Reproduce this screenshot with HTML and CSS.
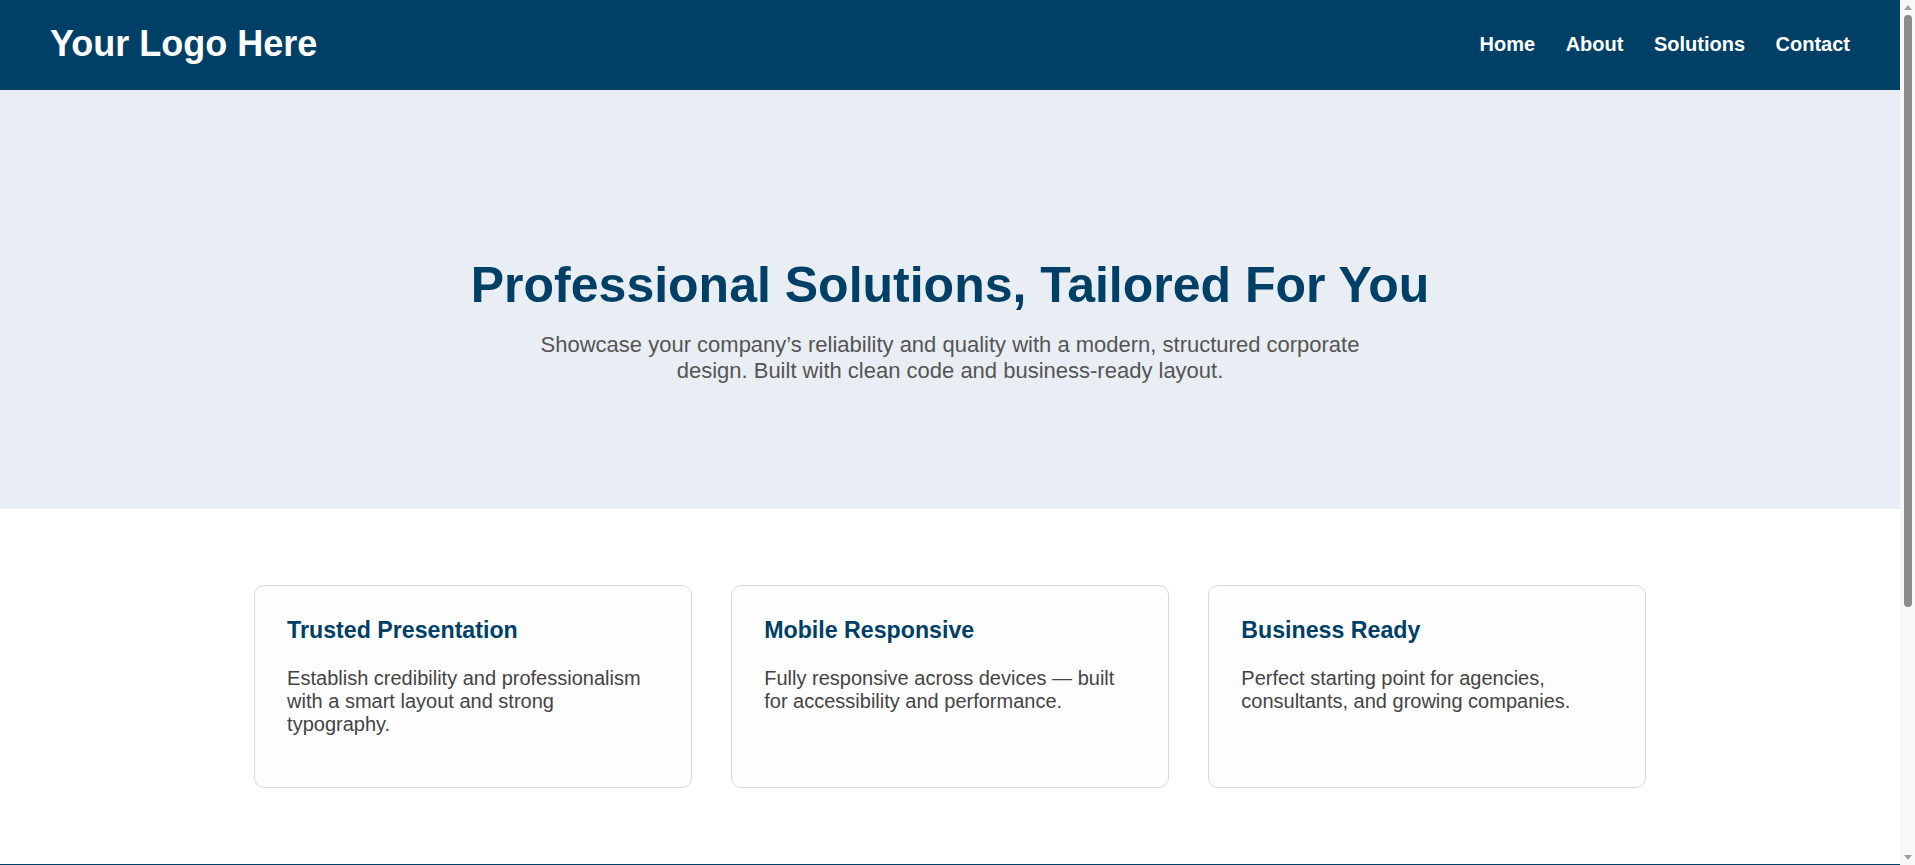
FILE: index.html
```html
<!DOCTYPE html>
<html lang="en">
<head>
<meta charset="UTF-8">
<title>Your Logo Here</title>
<link rel="stylesheet" href="styles.css">
</head>
<body>
<header class="site-header">
  <div class="logo">Your Logo Here</div>
  <nav class="nav">
    <a href="#" class="nav-link">Home</a>
    <a href="#" class="nav-link">About</a>
    <a href="#" class="nav-link">Solutions</a>
    <a href="#" class="nav-link">Contact</a>
  </nav>
</header>
<section class="hero">
  <h1 class="hero-title">Professional Solutions, Tailored For You</h1>
  <p class="hero-text">Showcase your company’s reliability and quality with a modern, structured corporate design. Built with clean code and business-ready layout.</p>
</section>
<section class="features">
  <div class="card">
    <h3 class="card-title">Trusted Presentation</h3>
    <p class="card-text">Establish credibility and professionalism with a smart layout and strong typography.</p>
  </div>
  <div class="card">
    <h3 class="card-title">Mobile Responsive</h3>
    <p class="card-text">Fully responsive across devices — built for accessibility and performance.</p>
  </div>
  <div class="card">
    <h3 class="card-title">Business Ready</h3>
    <p class="card-text">Perfect starting point for agencies, consultants, and growing companies.</p>
  </div>
</section>
<footer class="site-footer"></footer>
<div class="scrollbar" aria-hidden="true">
  <div class="sb-arrow sb-up"></div>
  <div class="sb-track">
    <div class="sb-thumb"></div>
  </div>
  <div class="sb-arrow sb-down"></div>
</div>
</body>
</html>
```

FILE: styles.css
```css
* {
  box-sizing: border-box;
}

html, body {
  margin: 0;
  padding: 0;
}

body {
  font-family: "Liberation Sans", Arial, Helvetica, sans-serif;
  background: #ffffff;
  color: #333333;
  margin-right: 15px;
}

.site-header {
  display: flex;
  justify-content: space-between;
  align-items: center;
  padding: 23px 50px 25px;
  background: #003f66;
  color: #ffffff;
}

.logo {
  font-size: 36px;
  font-weight: 700;
  line-height: normal;
}

.nav {
  display: flex;
  gap: 30.5px;
}

.nav-link {
  color: #ffffff;
  text-decoration: none;
  font-size: 20px;
  font-weight: 700;
}

.hero {
  background: #e8eef3;
  text-align: center;
  padding: 165.5px 20px 125.5px;
}

.hero-title {
  margin: 0 0 18px;
  font-size: 50px;
  font-weight: 700;
  line-height: normal;
  color: #003f66;
}

.hero-text {
  margin: 0 auto;
  max-width: 850px;
  font-size: 22px;
  line-height: normal;
  color: #555555;
}

.features {
  display: flex;
  justify-content: center;
  gap: 39.5px;
  padding: 75.5px 20px 76px;
}

.card {
  flex: 0 1 437.6px;
  background: #fdfdfe;
  border: 1px solid #d5dae2;
  border-radius: 10px;
  padding: 31px 32px;
}

.card-title {
  margin: 0 0 23px;
  font-size: 23.2px;
  font-weight: 700;
  line-height: normal;
  color: #003f66;
}

.card-text {
  margin: 0 0 20px;
  font-size: 20px;
  line-height: normal;
  color: #444444;
}

.site-footer {
  background: #003f66;
  height: 350px;
}

/* imitation of the window scrollbar that lies over the right edge */
.scrollbar {
  position: fixed;
  top: 0;
  right: 0;
  bottom: 0;
  width: 15px;
  background: #f8f8f8;
  display: flex;
  flex-direction: column;
  align-items: center;
}

.sb-arrow {
  width: 0;
  height: 0;
  border-left: 4.5px solid transparent;
  border-right: 4.5px solid transparent;
  flex: none;
}

.sb-up {
  margin: 5px 0 4px;
  border-bottom: 5px solid #a0a0a0;
}

.sb-down {
  margin: 4px 0 5px;
  border-top: 5px solid #a0a0a0;
}

.sb-track {
  flex: 1;
  width: 100%;
  display: flex;
  justify-content: center;
}

.sb-thumb {
  width: 8px;
  height: 592px;
  margin-top: 1px;
  border-radius: 4px;
  background: #8c8c8c;
}
```
